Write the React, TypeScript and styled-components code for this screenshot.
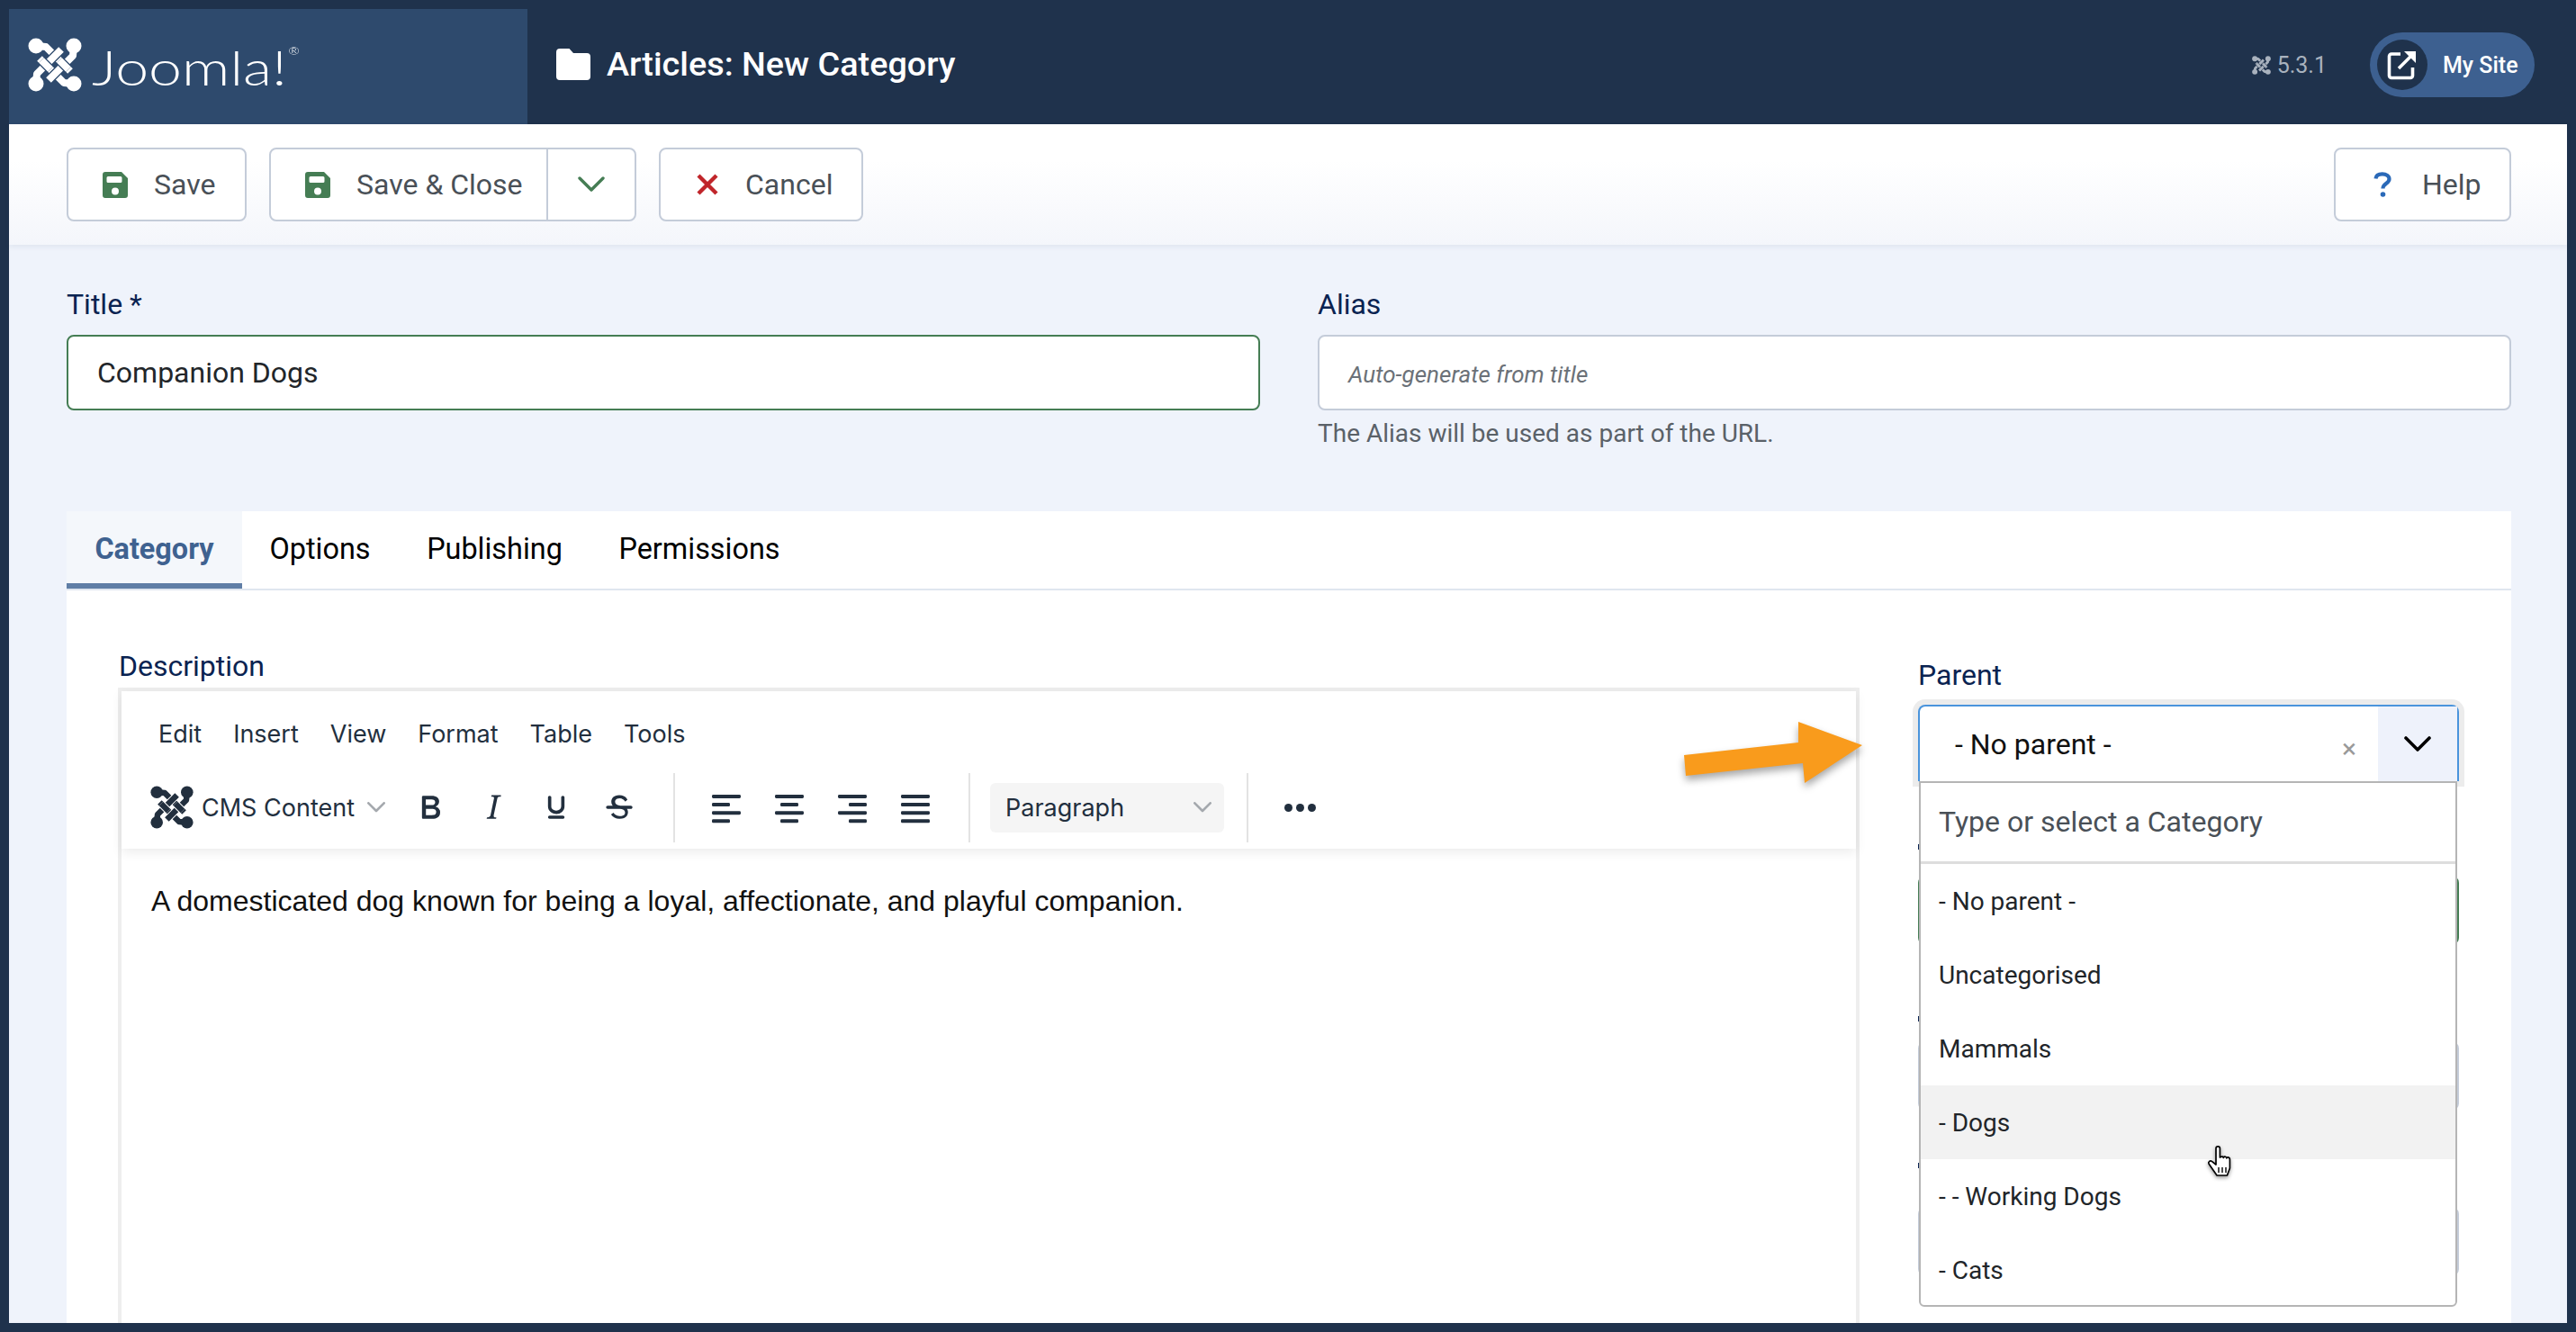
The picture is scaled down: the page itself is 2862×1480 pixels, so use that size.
import React from "react";
import styled, { createGlobalStyle } from "styled-components";

const GlobalStyle = createGlobalStyle`
  html, body {
    margin: 0;
    padding: 0;
    background: #1f324c;
    font-family: Roboto, "Liberation Sans", sans-serif;
  }
  * {
    box-sizing: border-box;
  }
`;

const Page = styled.div`
  width: 2862px;
  height: 1480px;
  overflow: hidden;
  background: #1f324c;
  display: flex;
  flex-direction: column;
`;

const Header = styled.header`
  height: 138px;
  flex-shrink: 0;
  padding: 10px 46px 0 10px;
  display: flex;
  align-items: stretch;
  color: #fff;
`;

const LogoBlock = styled.div`
  width: 576px;
  background: #2e4a6d;
  padding: 0 0 4px 21px;
  display: flex;
  align-items: center;
  gap: 11px;
`;

const WordMark = styled.span`
  font-family: Lato, sans-serif;
  font-weight: 300;
  font-size: 53px;
  line-height: 1;
  color: #fff;
  display: inline-flex;
  align-items: flex-start;
  margin-top: 4px;
  transform: scaleX(1.25);
  transform-origin: left center;
  sup {
    font-size: 12px;
    line-height: 1;
    margin: 3px 0 0 1px;
  }
`;

const PageTitle = styled.h1`
  margin: 0 0 0 32px;
  display: flex;
  align-items: center;
  gap: 18px;
  font-size: 37.8px;
  font-weight: 500;
  padding-bottom: 6px;
`;

const HeaderRight = styled.div`
  margin-left: auto;
  display: flex;
  align-items: center;
  padding-bottom: 4px;
`;

const Version = styled.span`
  display: flex;
  align-items: center;
  gap: 7px;
  font-size: 25px;
  color: #a9b2be;
  margin-right: 48px;
`;

const SitePill = styled.a`
  width: 183px;
  height: 72px;
  border-radius: 36px;
  background: #3d6090;
  display: flex;
  align-items: center;
  padding-left: 8px;
  gap: 17px;
  font-size: 25px;
  font-weight: 500;
  color: #fff;
`;

const SiteIcon = styled.span`
  width: 56px;
  height: 56px;
  border-radius: 50%;
  background: #1f324c;
  display: flex;
  align-items: center;
  justify-content: center;
`;

const Workspace = styled.main`
  flex: 1;
  min-height: 0;
  margin: 0 10px 10px;
  background: #eff3fb;
  display: flex;
  flex-direction: column;
`;

const Toolbar = styled.div`
  height: 134px;
  flex-shrink: 0;
  padding: 26px 62px 0 64px;
  display: flex;
  gap: 25px;
  background: linear-gradient(180deg, #ffffff 0%, #ffffff 30%, #f4f6fb 100%);
  box-shadow: 0 2px 6px rgba(30, 50, 90, 0.08);
`;

const ToolButton = styled.button<{ $wide?: number }>`
  height: 82px;
  width: ${(p) => p.$wide}px;
  flex-shrink: 0;
  background: #fff;
  border: 2px solid #c4ccd9;
  border-radius: 8px;
  padding: 0;
  display: flex;
  align-items: center;
  font: 400 32px Roboto, sans-serif;
  color: #495057;
`;

const ButtonMain = styled.span<{ $iconLeft: number; $gap: number }>`
  display: flex;
  align-items: center;
  height: 100%;
  padding-left: ${(p) => p.$iconLeft}px;
  gap: ${(p) => p.$gap}px;
`;

const ButtonArrow = styled.span`
  margin-left: auto;
  width: 98px;
  height: 100%;
  border-left: 2px solid #c4ccd9;
  display: flex;
  align-items: center;
  justify-content: center;
`;

const HelpButton = styled(ToolButton)`
  margin-left: auto;
`;

const TitleRow = styled.section`
  padding: 46px 62px 0 64px;
  display: grid;
  grid-template-columns: 1326px 1326px;
  gap: 64px;
`;

const Field = styled.div`
  display: flex;
  flex-direction: column;
`;

const Label = styled.label`
  font-size: 32px;
  line-height: 40px;
  color: #0a2351;
  display: block;
`;

const TextBox = styled.div<{ $border: string; $italic?: boolean }>`
  margin-top: 14px;
  height: 84px;
  background: #fff;
  border: 2px solid ${(p) => p.$border};
  border-radius: 8px;
  padding: ${(p) => (p.$italic ? 3 : 0)}px 0 0 32px;
  display: flex;
  align-items: center;
  font-size: ${(p) => (p.$italic ? 26 : 32)}px;
  font-style: ${(p) => (p.$italic ? "italic" : "normal")};
  color: ${(p) => (p.$italic ? "#6b7178" : "#22262a")};
`;

const Hint = styled.div`
  margin-top: 7px;
  font-size: 28px;
  line-height: 38px;
  color: #5a6168;
`;

const Card = styled.section`
  flex: 1;
  min-height: 0;
  margin: 67px 62px 0 64px;
  background: #fff;
  display: flex;
  flex-direction: column;
`;

const Tabs = styled.nav`
  height: 88px;
  flex-shrink: 0;
  display: flex;
  border-bottom: 2px solid #dfe6ef;
`;

const Tab = styled.a<{ $active?: boolean; $wide: number }>`
  width: ${(p) => p.$wide}px;
  height: 86px;
  padding-top: 4px;
  display: flex;
  align-items: center;
  justify-content: center;
  font-size: 32.4px;
  font-weight: ${(p) => (p.$active ? 700 : 400)};
  color: ${(p) => (p.$active ? "#3f6290" : "#000")};
  background: ${(p) => (p.$active ? "#f4f7fb" : "transparent")};
  border-bottom: 6px solid ${(p) => (p.$active ? "#5f7ea6" : "transparent")};
`;

const CardBody = styled.div`
  flex: 1;
  min-height: 0;
  padding: 0 58px 0 57px;
  display: grid;
  grid-template-columns: 1935px 601px;
  gap: 65px;
`;

const EditorColumn = styled.div`
  padding-top: 64px;
  display: flex;
  flex-direction: column;
  min-height: 0;
`;

const DescriptionLabel = styled(Label)`
  padding-left: 1px;
`;

const Editor = styled.div`
  flex: 1;
  margin-top: 4px;
  border: 4px solid #eeeeee;
  border-bottom: 0;
  font-family: Inter, sans-serif;
  color: #222f3e;
`;

const EditorHeader = styled.div`
  height: 175px;
  box-shadow: 0 4px 12px rgba(0, 0, 0, 0.08);
  display: flex;
  flex-direction: column;
`;

const MenuBar = styled.div`
  height: 88px;
  padding: 6px 0 0 41px;
  display: flex;
  align-items: center;
  gap: 35px;
  font-size: 27px;
`;

const EditorTools = styled.div`
  height: 87px;
  padding: 0 0 5px 32px;
  display: flex;
  align-items: center;
`;

const FormatName = styled.span`
  margin-left: 9px;
  width: 232px;
  flex-shrink: 0;
  display: flex;
  align-items: center;
  gap: 14px;
  font-size: 27px;
  white-space: nowrap;
  color: #222f3e;
  svg {
    flex-shrink: 0;
  }
`;

const ToolIcon = styled.svg`
  width: 44px;
  height: 44px;
  margin-right: 26px;
  flex-shrink: 0;
  fill: #222f3e;
`;

const ToolDivider = styled.span<{ $before: number; $after: number }>`
  width: 2px;
  height: 77px;
  background: #e3e3e3;
  margin: 0 ${(p) => p.$after}px 0 ${(p) => p.$before}px;
  flex-shrink: 0;
`;

const ParagraphSelect = styled.span`
  width: 260px;
  height: 55px;
  flex-shrink: 0;
  background: #f5f5f5;
  border-radius: 6px;
  padding: 0 14px 0 17px;
  display: flex;
  align-items: center;
  justify-content: space-between;
  font-size: 27px;
  margin-right: 25px;
`;

const MoreDots = styled.span`
  display: flex;
  gap: 4px;
  span {
    width: 9px;
    height: 9px;
    border-radius: 50%;
    background: #222f3e;
  }
`;

const EditorBody = styled.div`
  padding: 38px 0 0 33px;
  font-family: "Liberation Sans", Arial, sans-serif;
  font-size: 32px;
  line-height: 40px;
  color: #111;
`;

const SideColumn = styled.div`
  padding-top: 74px;
  display: flex;
  flex-direction: column;
`;

const ParentSelect = styled.div`
  position: relative;
  margin: 13px 0 -2px;
  height: 85px;
  border: 2px solid #4a94dc;
  border-bottom: 0;
  border-radius: 8px 8px 0 0;
  background: #fff;
  box-shadow: 0 0 0 6px #ececec;
  display: flex;
  align-items: center;
  padding-left: 39px;
  font-size: 32px;
  color: #111;
`;

const ClearMark = styled.span`
  position: absolute;
  right: 112px;
  top: 29px;
  font-size: 30px;
  color: #999;
`;

const ArrowCell = styled.span`
  position: absolute;
  top: 0;
  right: 0;
  bottom: 0;
  width: 88px;
  background: #eef2fb;
  display: flex;
  align-items: center;
  justify-content: center;
`;

const Callout = styled.svg`
  position: absolute;
  left: -264px;
  top: 17px;
  width: 204px;
  height: 76px;
  overflow: visible;
  filter: drop-shadow(0 5px 4px rgba(0, 0, 0, 0.35));
`;

const Dropdown = styled.div`
  position: absolute;
  z-index: 2;
  left: -1px;
  right: 0;
  top: 83px;
  height: 584px;
  background: #fff;
  border: 2px solid #b5b5b5;
  border-radius: 0 0 6px 6px;
`;

const SearchRow = styled.div`
  height: 90px;
  border-bottom: 3px solid #dddddd;
  padding: 0 0 2px 20px;
  display: flex;
  align-items: center;
  font-size: 32px;
  color: #495057;
`;

const Option = styled.div<{ $hover?: boolean }>`
  position: relative;
  height: 82px;
  padding-left: 20px;
  display: flex;
  align-items: center;
  font-size: 28px;
  color: #212529;
  background: ${(p) => (p.$hover ? "#f2f2f2" : "transparent")};
`;

const Pointer = styled.svg`
  position: absolute;
  left: 317px;
  top: 66px;
  width: 32px;
  height: 36px;
  filter: drop-shadow(0 2px 2px rgba(0, 0, 0, 0.4));
`;

// the fields behind the open list: only their edges and a sliver of each label show
const BelowField = styled.div<{ $markTop: number }>`
  margin-top: 54px;
  padding-top: 53px;
  position: relative;
  &::before {
    content: "";
    position: absolute;
    left: 0;
    top: ${(p) => p.$markTop}px;
    width: 1px;
    height: 6px;
    background: #0a2351;
  }
`;

const BelowSelect = styled.div<{ $border: string }>`
  height: 77px;
  background: #fff;
  border: 2px solid ${(p) => p.$border};
  border-radius: 8px;
`;

const Chevron = ({ size, color, width = 3 }: { size: number; color: string; width?: number }) => (
  <svg width={size} height={size * 0.6} viewBox="0 0 30 18" fill="none">
    <path d="M2 2 15 15 28 2" stroke={color} strokeWidth={width} strokeLinecap="round" strokeLinejoin="round" />
  </svg>
);

// four balls with woven straps, gaps take the colour of what is behind
const JoomlaMark = ({ size, color, gap }: { size: number; color: string; gap: string }) => {
  const under = ["M9 9 20 10 47 37", "M51 51 40 50 13 23"];
  const over = ["M51 9 50 20 23 47", "M9 51 10 40 37 13"];
  const patches = ["M35 25 45 35", "M15 25 25 35"];
  return (
    <svg width={size} height={size} viewBox="0 0 60 60" fill="none" strokeLinejoin="round">
      {[...under, ...over, ...patches].map((d) => (
        <g key={d}>
          <path d={d} stroke={gap} strokeWidth="10.5" />
          <path d={d} stroke={color} strokeWidth="8" />
        </g>
      ))}
      {[[9, 9], [51, 9], [9, 51], [51, 51]].map(([cx, cy]) => (
        <circle key={`${cx}-${cy}`} cx={cx} cy={cy} r="8.5" fill={color} />
      ))}
    </svg>
  );
};

const FolderIcon = () => (
  <svg width="38" height="35" viewBox="0 0 38 35">
    <path
      fill="#fff"
      d="M4 0H14.500L19 5H34A4 4 0 0 1 38 9V31A4 4 0 0 1 34 35H4A4 4 0 0 1 0 31V4A4 4 0 0 1 4 0Z"
    />
  </svg>
);

const SaveIcon = () => (
  <svg width="28" height="29" viewBox="0 0 28 29">
    <path
      fillRule="evenodd"
      fill="#457d54"
      d="M3 0H21L28 7V26A3 3 0 0 1 25 29H3A3 3 0 0 1 0 26V3A3 3 0 0 1 3 0ZM6 5A1.5 1.5 0 0 0 4.5 6.500V10.500A1.500 1.500 0 0 0 6 12H20A1.500 1.500 0 0 0 21.500 10.500V6.500A1.500 1.500 0 0 0 20 5ZM14 17.500A4 4 0 1 0 14 25.500 4 4 0 1 0 14 17.500Z"
    />
  </svg>
);

const RedCross = () => (
  <svg width="26" height="26" viewBox="0 0 26 26" fill="none">
    <path d="M3 3 23 23M23 3 3 23" stroke="#c0252a" strokeWidth="4.4" />
  </svg>
);

const HelpMark = () => (
  <svg width="20" height="28" viewBox="0 0 20 28" fill="none">
    <path d="M2.500 7.500C2.800 4 5.800 2.300 9.800 2.300 14.300 2.300 17.500 4.500 17.500 8 17.500 13 10.500 12.500 10.500 18.500" stroke="#2a69b8" strokeWidth="4.2" />
    <circle cx="10.500" cy="25" r="2.800" fill="#2a69b8" />
  </svg>
);

const AlignLines = ({ lines }: { lines: [number, number][] }) => (
  <ToolIcon viewBox="0 0 44 44">
    {lines.map(([x, w], i) => (
      <rect key={i} x={x} y={8 + i * 9.1} width={w} height="4" rx="1.4" />
    ))}
  </ToolIcon>
);

const tinyBold =
  "M7.8 19c-.3 0-.5 0-.6-.2l-.2-.5V5.7c0-.2 0-.4.2-.5l.6-.2h5c1.5 0 2.7.3 3.5 1 .7.6 1.1 1.4 1.1 2.5a3 3 0 0 1-.6 1.9c-.4.6-1 1-1.6 1.2.4.1.9.3 1.3.6s.8.7 1 1.2c.4.4.5 1 .5 1.6 0 1.3-.4 2.3-1.3 3-.8.7-2.1 1-3.8 1H7.8Zm5-8.3c.6 0 1.2-.1 1.6-.5.4-.3.6-.7.6-1.3 0-1.1-.8-1.7-2.3-1.7H9.3v3.5h3.4Zm.5 6c.7 0 1.3-.1 1.7-.4.4-.4.6-.9.6-1.5s-.2-1-.7-1.4c-.4-.3-1-.4-2-.4H9.4v3.8h4Z";
const tinyItalic =
  "M16.7 4.7l-.1.9h-.3c-.6 0-1 0-1.4.3-.3.3-.4.6-.5 1.1l-2.1 9.8v.6c0 .5.4.8 1.4.8h.2l-.2.8H8l.2-.8h.2c1.1 0 1.8-.5 2-1.5l2-9.8.1-.5c0-.6-.4-.8-1.4-.8h-.3l.2-.9h5.8Z";
const tinyUnderline =
  "M16 5c.6 0 1 .4 1 1v5.5a4 4 0 0 1-.4 1.8l-1 1.4a5.3 5.3 0 0 1-5.5 1 5 5 0 0 1-1.6-1c-.5-.4-.8-.9-1.1-1.4a4 4 0 0 1-.4-1.8V6c0-.6.4-1 1-1s1 .4 1 1v5.5c0 .3 0 .6.2 1l.6.7a3.3 3.3 0 0 0 2.2.8 3.4 3.4 0 0 0 2.2-.8c.3-.2.4-.5.6-.8l.2-.9V6c0-.6.4-1 1-1ZM8 17h8c.6 0 1 .4 1 1s-.4 1-1 1H8a1 1 0 0 1 0-2Z";
const tinyStrike =
  "M15.6 8.5c-.5-.7-1-1.1-1.3-1.3-.6-.4-1.3-.6-2-.6-2.7 0-2.8 1.7-2.8 2.1 0 1.6 1.8 2 3.2 2.3 4.4.9 4.6 2.8 4.6 3.9 0 1.4-.7 4.1-5 4.1A6.2 6.2 0 0 1 7 16.4l1.5-1.1c.4.6 1.6 2 3.7 2 1.6 0 2.5-.4 3-1 .3-.4.3-.8.3-1.1 0-.5 0-2.1-3-2.3a9.6 9.6 0 0 1-3.4-1.2 3.4 3.4 0 0 1-1.9-3.1c0-1.8 1.3-3.9 4.8-3.9 2.3 0 3.4.9 4.1 1.5l.9 1.2-1.4 1.2ZM5 11h14c.6 0 1 .4 1 1s-.4 1-1 1H5a1 1 0 0 1 0-2Z";

const options = ["- No parent -", "Uncategorised", "Mammals", "- Dogs", "- - Working Dogs", "- Cats"];
const menus = ["Edit", "Insert", "View", "Format", "Table", "Tools"];

const App = () => (
  <Page>
    <GlobalStyle />
    <Header>
      <LogoBlock>
        <JoomlaMark size={60} color="#fff" gap="#2e4a6d" />
        <WordMark>
          Joomla!<sup>®</sup>
        </WordMark>
      </LogoBlock>
      <PageTitle>
        <FolderIcon />
        Articles: New Category
      </PageTitle>
      <HeaderRight>
        <Version>
          <JoomlaMark size={21} color="#a9b2be" gap="#1f324c" />
          5.3.1
        </Version>
        <SitePill>
          <SiteIcon>
            <svg width="34" height="34" viewBox="0 0 34 34" fill="none">
              <path d="M15 5H5a2.5 2.5 0 0 0-2.5 2.5V29A2.5 2.5 0 0 0 5 31.5h21a2.5 2.5 0 0 0 2.5-2.5V20" stroke="#fff" strokeWidth="3.6" />
              <path d="M13 21 27 7" stroke="#fff" strokeWidth="3.6" />
              <path d="M19 2h13v13z" fill="#fff" />
            </svg>
          </SiteIcon>
          My Site
        </SitePill>
      </HeaderRight>
    </Header>
    <Workspace>
      <Toolbar>
        <ToolButton $wide={200}>
          <ButtonMain $iconLeft={38} $gap={29}>
            <SaveIcon />
            Save
          </ButtonMain>
        </ToolButton>
        <ToolButton $wide={408}>
          <ButtonMain $iconLeft={38} $gap={29}>
            <SaveIcon />
            Save &amp; Close
          </ButtonMain>
          <ButtonArrow>
            <Chevron size={30} color="#457d54" width={3.4} />
          </ButtonArrow>
        </ToolButton>
        <ToolButton $wide={227}>
          <ButtonMain $iconLeft={39} $gap={29}>
            <RedCross />
            Cancel
          </ButtonMain>
        </ToolButton>
        <HelpButton $wide={197}>
          <ButtonMain $iconLeft={42} $gap={34}>
            <HelpMark />
            Help
          </ButtonMain>
        </HelpButton>
      </Toolbar>
      <TitleRow>
        <Field>
          <Label>Title *</Label>
          <TextBox $border="#457d54">Companion Dogs</TextBox>
        </Field>
        <Field>
          <Label>Alias</Label>
          <TextBox $border="#c4ccd9" $italic>
            Auto-generate from title
          </TextBox>
          <Hint>The Alias will be used as part of the URL.</Hint>
        </Field>
      </TitleRow>
      <Card>
        <Tabs>
          <Tab $active $wide={195}>
            Category
          </Tab>
          <Tab $wide={173}>Options</Tab>
          <Tab $wide={215}>Publishing</Tab>
          <Tab $wide={240}>Permissions</Tab>
        </Tabs>
        <CardBody>
          <EditorColumn>
            <DescriptionLabel>Description</DescriptionLabel>
            <Editor>
              <EditorHeader>
                <MenuBar>
                  {menus.map((m) => (
                    <span key={m}>{m}</span>
                  ))}
                </MenuBar>
                <EditorTools>
                  <JoomlaMark size={48} color="#222f3e" gap="#fff" />
                  <FormatName>
                    CMS Content
                    <Chevron size={20} color="#a5a9ae" width={4} />
                  </FormatName>
                  <ToolIcon viewBox="0 0 24 24">
                    <path d={tinyBold} />
                  </ToolIcon>
                  <ToolIcon viewBox="0 0 24 24">
                    <path d={tinyItalic} />
                  </ToolIcon>
                  <ToolIcon viewBox="0 0 24 24">
                    <path d={tinyUnderline} />
                  </ToolIcon>
                  <ToolIcon viewBox="0 0 24 24">
                    <path d={tinyStrike} />
                  </ToolIcon>
                  <ToolDivider $before={12} $after={35} />
                  <AlignLines lines={[[6, 32], [6, 20], [6, 32], [6, 20]]} />
                  <AlignLines lines={[[6, 32], [12, 20], [6, 32], [12, 20]]} />
                  <AlignLines lines={[[6, 32], [18, 20], [6, 32], [18, 20]]} />
                  <AlignLines lines={[[6, 32], [6, 32], [6, 32], [6, 32]]} />
                  <ToolDivider $before={11} $after={22} />
                  <ParagraphSelect>
                    Paragraph
                    <Chevron size={20} color="#a5a9ae" width={4} />
                  </ParagraphSelect>
                  <ToolDivider $before={0} $after={40} />
                  <MoreDots>
                    <span />
                    <span />
                    <span />
                  </MoreDots>
                </EditorTools>
              </EditorHeader>
              <EditorBody>A domesticated dog known for being a loyal, affectionate, and playful companion.</EditorBody>
            </Editor>
          </EditorColumn>
          <SideColumn>
            <Label>Parent</Label>
            <ParentSelect>
              - No parent -
              <ClearMark>×</ClearMark>
              <ArrowCell>
                <Chevron size={30} color="#000" width={3.6} />
              </ArrowCell>
              <Callout viewBox="0 0 204 76">
                <path d="M2 37 129 23V0L200 26 136 68 134 46 4 60Z" fill="#f99b1c" />
              </Callout>
              <Dropdown>
                <SearchRow>Type or select a Category</SearchRow>
                {options.map((o) => (
                  <Option key={o} $hover={o === "- Dogs"}>
                    {o}
                    {o === "- Dogs" && (
                      <Pointer viewBox="0 0 32 36">
                        <path
                          d="M11 22V4a2.2 2.2 0 0 1 4.4 0v10l1-.6a2 2 0 0 1 3 1v-.6a2 2 0 0 1 3.4 1 2 2 0 0 1 3.6 1.2V26l-3 8H12L3 21a2.2 2.2 0 0 1 3.4-2.6Z"
                          fill="#fff"
                          stroke="#000"
                          strokeWidth="1.7"
                          strokeLinejoin="round"
                        />
                        <path d="M14 25v6M18 25v6M22 25v6" stroke="#000" strokeWidth="1.4" />
                      </Pointer>
                    )}
                  </Option>
                ))}
              </Dropdown>
            </ParentSelect>
            <BelowField $markTop={18}>
              <BelowSelect $border="#457d54" />
            </BelowField>
            <BelowField $markTop={25}>
              <BelowSelect $border="#c4ccd9" />
            </BelowField>
            <BelowField $markTop={4}>
              <BelowSelect $border="#c4ccd9" />
            </BelowField>
          </SideColumn>
        </CardBody>
      </Card>
    </Workspace>
  </Page>
);

export default App;
